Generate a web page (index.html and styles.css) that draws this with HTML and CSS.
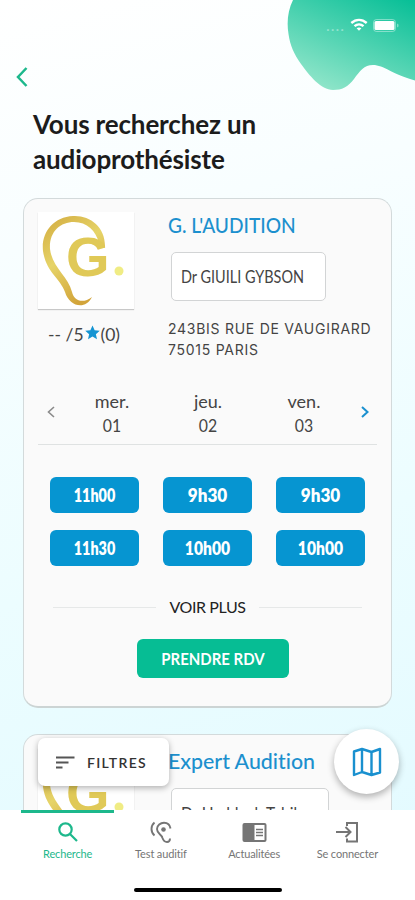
FILE: index.html
```html
<!DOCTYPE html>
<html lang="fr">
<head>
    <meta charset="UTF-8">
    <meta name="viewport" content="width=device-width, initial-scale=1.0">
    <title>Recherche audioprothésiste</title>
    <link rel="stylesheet" href="styles.css">
</head>
<body>
    <div class="app">
        <svg class="blob" width="130" height="95" viewBox="0 0 130 95">
            <defs>
                <linearGradient id="blobFill" x1="0.95" y1="0" x2="0.3" y2="1">
                    <stop offset="0" stop-color="#08bf97"/>
                    <stop offset="1" stop-color="#8fe5c9"/>
                </linearGradient>
            </defs>
            <path d="M6 0C1 10 -0.500 22 1.500 34C3 45 7 54 14 64C22 75 34 90 46 90C55 90 61 87 67 79C73 71 77 65 86 65C97 65 106 75 130 81V0Z" fill="url(#blobFill)"/>
        </svg>
        <div class="status">
            <span class="dots">....</span>
            <svg width="18" height="14" viewBox="0 0 18 14" fill="none" stroke="#fff" stroke-width="2.4">
                <path d="M1.3 5C6 .9 12 .9 16.7 5M4.5 8.2C7.2 5.8 10.8 5.8 13.5 8.2"/>
                <path d="M6.6 10.3Q9 8.6 11.4 10.3L9 12.8Z" fill="#fff" stroke="none"/>
            </svg>
            <svg width="26" height="13" viewBox="0 0 26 13">
                <rect x=".5" y=".5" width="22" height="12" rx="3" fill="none" stroke="#fff" stroke-opacity=".4"/>
                <rect x="1.5" y="2" width="20" height="9" rx="1.5" fill="#fff"/>
                <path d="M24 4.500V8.500L25.500 7.500V5.500Z" fill="#fff" fill-opacity=".4"/>
            </svg>
        </div>

        <header class="header">
            <svg class="back" width="12" height="20" viewBox="0 0 12 20" fill="none" stroke="#1db88c" stroke-width="2.500">
                <path d="M10.500 1L2 10L10.500 19"/>
            </svg>
            <h1>Vous recherchez un<br>audioprothésiste</h1>
        </header>

        <main class="results">
            <article class="card">
                <div class="card-top">
                    <div class="card-side">
                        <svg class="logo" width="96" height="97" viewBox="0 0 96 97">
                            <defs>
                                <linearGradient id="gold" x1="0" y1="0" x2="0.5" y2="1">
                                    <stop offset="0" stop-color="#d2aa3f"/>
                                    <stop offset="0.5" stop-color="#e6d468"/>
                                    <stop offset="1" stop-color="#d2a43a"/>
                                </linearGradient>
                            </defs>
                            <path d="M67 36C68 15 52 3 35 4C15 5 3 21 5 39C8 60 22 66 27 80C31 94 47 99 54 85C45 92 36 89 34 80C30 64 14 55 12 37C11 20 22 10 36 10C49 10 58 19 61 31Z" fill="url(#gold)"/>
                            <text x="28" y="64" class="logo-text" fill="#e0c957">G</text>
                            <circle cx="81" cy="59" r="4.500" fill="#f0ec84"/>
                        </svg>
                        <div class="rating">
                            <span>-- /5</span>
                            <svg width="15" height="15" viewBox="0 0 24 24" fill="#1594d2"><path d="M12 .8L15.400 8.400L23.600 9.200L17.400 14.700L19.200 22.800L12 18.500L4.800 22.800L6.600 14.700L.4 9.200L8.600 8.400Z"/></svg>
                            <span>(0)</span>
                        </div>
                    </div>
                    <div class="card-info">
                        <h2 class="name-caps">G. L'AUDITION</h2>
                        <div class="doctor"><span class="doctor-caps">Dr GIUILI GYBSON</span></div>
                        <p class="address">243BIS RUE DE VAUGIRARD<br>75015 PARIS</p>
                    </div>
                </div>

                <div class="days">
                    <svg width="8" height="12" viewBox="0 0 8 12" fill="none" stroke="#8a8a8a" stroke-width="1.600"><path d="M7 1L1.500 6L7 11"/></svg>
                    <div class="day">mer.<span class="num">01</span></div>
                    <div class="day">jeu.<span class="num">02</span></div>
                    <div class="day">ven.<span class="num">03</span></div>
                    <svg width="8" height="12" viewBox="0 0 8 12" fill="none" stroke="#1a90cf" stroke-width="2"><path d="M1 1L6.500 6L1 11"/></svg>
                </div>

                <div class="slots">
                    <button class="slot narrow"><span>11h00</span></button>
                    <button class="slot"><span>9h30</span></button>
                    <button class="slot"><span>9h30</span></button>
                    <button class="slot narrow"><span>11h30</span></button>
                    <button class="slot long"><span>10h00</span></button>
                    <button class="slot long"><span>10h00</span></button>
                </div>

                <div class="more"><span>VOIR PLUS</span></div>
                <button class="book"><span>PRENDRE RDV</span></button>
            </article>

            <article class="card">
                <div class="card-top">
                    <div class="card-side">
                        <svg class="logo" width="96" height="97" viewBox="0 0 96 97">
                            <path d="M67 36C68 15 52 3 35 4C15 5 3 21 5 39C8 60 22 66 27 80C31 94 47 99 54 85C45 92 36 89 34 80C30 64 14 55 12 37C11 20 22 10 36 10C49 10 58 19 61 31Z" fill="url(#gold)"/>
                            <text x="28" y="64" class="logo-text" fill="#e0c957">G</text>
                            <circle cx="81" cy="59" r="4.500" fill="#f0ec84"/>
                        </svg>
                    </div>
                    <div class="card-info">
                        <h2 class="name">Expert Audition</h2>
                        <div class="doctor wide"><span>Dr Haddock Tabib</span></div>
                    </div>
                </div>
            </article>
        </main>

        <button class="filters">
            <svg width="19" height="13" viewBox="0 0 19 13" stroke="#555" stroke-width="1.900"><path d="M0 1.500H18.500M0 6.500H12.500M0 11.500H6.500"/></svg>
            <span>FILTRES</span>
        </button>
        <button class="map">
            <svg width="30" height="30" viewBox="0 0 30 30" fill="none" stroke="#1990cf" stroke-width="2.400" stroke-linejoin="round">
                <path d="M2 4.500L10 2L19.500 5L28 2V25.500L19.500 28L10 25L2 28ZM10 2V25M19.500 5V28"/>
            </svg>
        </button>

        <nav class="tabs">
            <a class="tab active">
                <svg width="24" height="24" viewBox="0 0 24 24" fill="none" stroke="currentColor" stroke-width="2.200"><circle cx="9.500" cy="9.500" r="6.200"/><path d="M14 14L21 21"/></svg>
                <span>Recherche</span>
            </a>
            <a class="tab">
                <svg width="24" height="24" viewBox="0 0 24 24" fill="none" stroke="currentColor" stroke-width="1.900">
                    <path d="M21.500 8.500C21 5 18.500 2.700 15 2.700S8 5.500 8 9C8 14 12.500 14 13.500 18C14.500 21 16 22 18 22S21 20.500 21 18.500M5.500 2.500Q2.500 5 2.500 9T5.500 15.500"/>
                    <circle cx="14.500" cy="9.500" r="2.300" fill="currentColor" stroke="none"/>
                </svg>
                <span>Test auditif</span>
            </a>
            <a class="tab">
                <svg width="26" height="24" viewBox="0 0 26 24">
                    <rect x="1.500" y="3" width="24" height="19" rx="2" fill="currentColor"/>
                    <path d="M13.500 5H23.500V20H13.500Z" fill="#fff"/>
                    <path d="M15 9.500H22M15 12.500H22M15 15.500H22" stroke="currentColor" stroke-width="1.500"/>
                </svg>
                <span>Actualitées</span>
            </a>
            <a class="tab">
                <svg width="24" height="24" viewBox="0 0 24 24" fill="none" stroke="currentColor" stroke-width="2"><path d="M12 6V3H22V21.500H12V18.500M1 12H15M10.500 7L15.500 12L10.500 17"/></svg>
                <span>Se connecter</span>
            </a>
        </nav>
        <div class="home-bar"></div>
    </div>
</body>
</html>
```
FILE: styles.css
```css
* {
    box-sizing: border-box;
}

body {
    margin: 0;
    font-family: "Lato", "Liberation Sans", sans-serif;
    font-variant-ligatures: none;
    color: #444;
}

button {
    border: 0;
    padding: 0;
    font-family: inherit;
}

svg {
    display: block;
    flex-shrink: 0;
}

.app {
    position: relative;
    height: 900px;
    overflow: hidden;
    background: linear-gradient(165deg, #fff 0%, #f8feff 25%, #ecfdff 60%, #e2faff 100%);
}

.blob {
    position: absolute;
    top: 0;
    left: 287px;
}

.status {
    position: absolute;
    top: 18px;
    right: 16px;
    display: flex;
    align-items: center;
    gap: 5px;
}

.dots {
    color: rgba(255, 255, 255, 0.4);
    font-size: 16px;
    line-height: 14px;
    letter-spacing: 1px;
}

.header {
    height: 198px;
    padding: 67px 16px 0;
}

.header h1 {
    margin: 20px 0 0 17px;
    font-size: 26px;
    font-weight: 700;
    line-height: 35px;
    letter-spacing: -0.15px;
    color: #1c1c1c;
}

.results {
    display: flex;
    flex-direction: column;
    gap: 26px;
    padding: 0 23px;
}

.card {
    height: 510px;
    flex-shrink: 0;
    padding: 13px 14px;
    border: 1px solid #d3dadb;
    border-bottom: 2px solid #ccd4d4;
    border-radius: 15px;
    background: #fafafa;
}

.card-top {
    display: flex;
    gap: 34px;
    height: 166px;
}

.card-side {
    width: 96px;
}

.logo {
    background: #fff;
    box-shadow: 0 1px 1px rgba(0, 0, 0, 0.2);
}

.logo-text {
    font: 700 56px "Liberation Sans", sans-serif;
}

.rating {
    display: flex;
    align-items: center;
    gap: 1px;
    margin: 15px 0 0 10px;
    font-size: 17.5px;
    line-height: 22px;
    white-space: nowrap;
}

.rating svg {
    margin-bottom: 5px;
}

/* Condensed look for the capitals and figures */
.name-caps,
.name,
.doctor span {
    transform-origin: left center;
}

.card-info h2 {
    margin: -1px 0 14px;
    font-size: 22px;
    font-weight: 500;
    line-height: 27px;
    color: #1c90ce;
    white-space: nowrap;
}

.name-caps {
    width: 146px;
    transform: scaleX(0.87);
}

.name {
    width: 150px;
    transform: scaleX(0.97);
}

.doctor {
    display: flex;
    align-items: center;
    width: 155px;
    height: 49px;
    margin-left: 3px;
    padding-left: 9px;
    border: 1px solid #d2d4d5;
    border-radius: 5px;
    background: #fff;
    font-size: 17px;
    white-space: nowrap;
}

.doctor span {
    transform: scaleX(0.91);
}

.doctor .doctor-caps {
    transform: scaleX(0.85);
}

.doctor.wide {
    width: 158px;
    padding-top: 2px;
}

.address {
    width: 205px;
    margin: 17px 0 0;
    font-family: "Inter", sans-serif;
    font-size: 14px;
    line-height: 21px;
    letter-spacing: 0.73px;
    white-space: nowrap;
}

.days {
    display: flex;
    align-items: center;
    justify-content: space-between;
    height: 67px;
    padding: 4px 8px 0 9px;
    border-bottom: 1px solid #dfe2e2;
}

.day {
    width: 78px;
    text-align: center;
    font-size: 18px;
    line-height: 24px;
}

.days svg {
    margin-bottom: 2px;
}

.num {
    display: block;
    transform: scaleX(0.88);
}

.slots {
    display: grid;
    grid-template-columns: repeat(3, 89px);
    gap: 17px 24px;
    padding: 32px 0 0 12px;
}

.slot {
    height: 36px;
    border-radius: 6px;
    background: #0695d1;
    color: #fff;
    font-size: 18px;
    font-weight: 800;
}

.slot span {
    display: block;
    transform: scaleX(0.95);
}

.slot.narrow span {
    transform: scaleX(0.8);
}

.slot.long span {
    transform: scaleX(0.87);
}

.more {
    display: flex;
    align-items: center;
    gap: 13px;
    margin: 31px 15px 0;
    font-size: 16px;
    line-height: 20px;
    letter-spacing: -0.4px;
    color: #222;
    white-space: nowrap;
}

.more::before,
.more::after {
    content: "";
    flex: 1;
    height: 1px;
    background: #e6e8e8;
}

.book {
    display: block;
    width: 152px;
    height: 39px;
    margin: 22px 0 0 99px;
    border-radius: 6px;
    background: #06bd94;
    color: #fff;
    font-size: 17px;
    font-weight: 700;
}

.book span {
    display: block;
    transform: scaleX(0.88);
}

/* Floating buttons */
.filters {
    position: absolute;
    top: 738px;
    left: 38px;
    display: flex;
    align-items: center;
    gap: 12px;
    width: 131px;
    height: 48px;
    padding-left: 18px;
    border-radius: 7px;
    background: #fff;
    box-shadow: 0 2px 6px rgba(0, 0, 0, 0.3);
    font-size: 14px;
    font-weight: 600;
    letter-spacing: 1.3px;
    color: #333;
}

.map {
    position: absolute;
    top: 729px;
    left: 334px;
    display: flex;
    align-items: center;
    justify-content: center;
    width: 65px;
    height: 65px;
    border-radius: 50%;
    background: #fff;
    box-shadow: 0 3px 7px rgba(0, 0, 0, 0.3);
}

/* Bottom navigation */
.tabs {
    position: absolute;
    left: 0;
    right: 0;
    bottom: 0;
    display: flex;
    height: 90px;
    padding: 0 21px;
    background: #fff;
}

.tab {
    display: flex;
    flex: 1;
    flex-direction: column;
    align-items: center;
    gap: 2px;
    height: 60px;
    padding-top: 10px;
    font-size: 11px;
    line-height: 16px;
    letter-spacing: -0.15px;
    color: #757575;
    white-space: nowrap;
}

.tab.active {
    color: #1db88c;
    box-shadow: inset 0 3px #1db88c;
}

.home-bar {
    position: absolute;
    bottom: 8px;
    left: 134px;
    width: 148px;
    height: 4px;
    border-radius: 2px;
    background: #000;
}
```
